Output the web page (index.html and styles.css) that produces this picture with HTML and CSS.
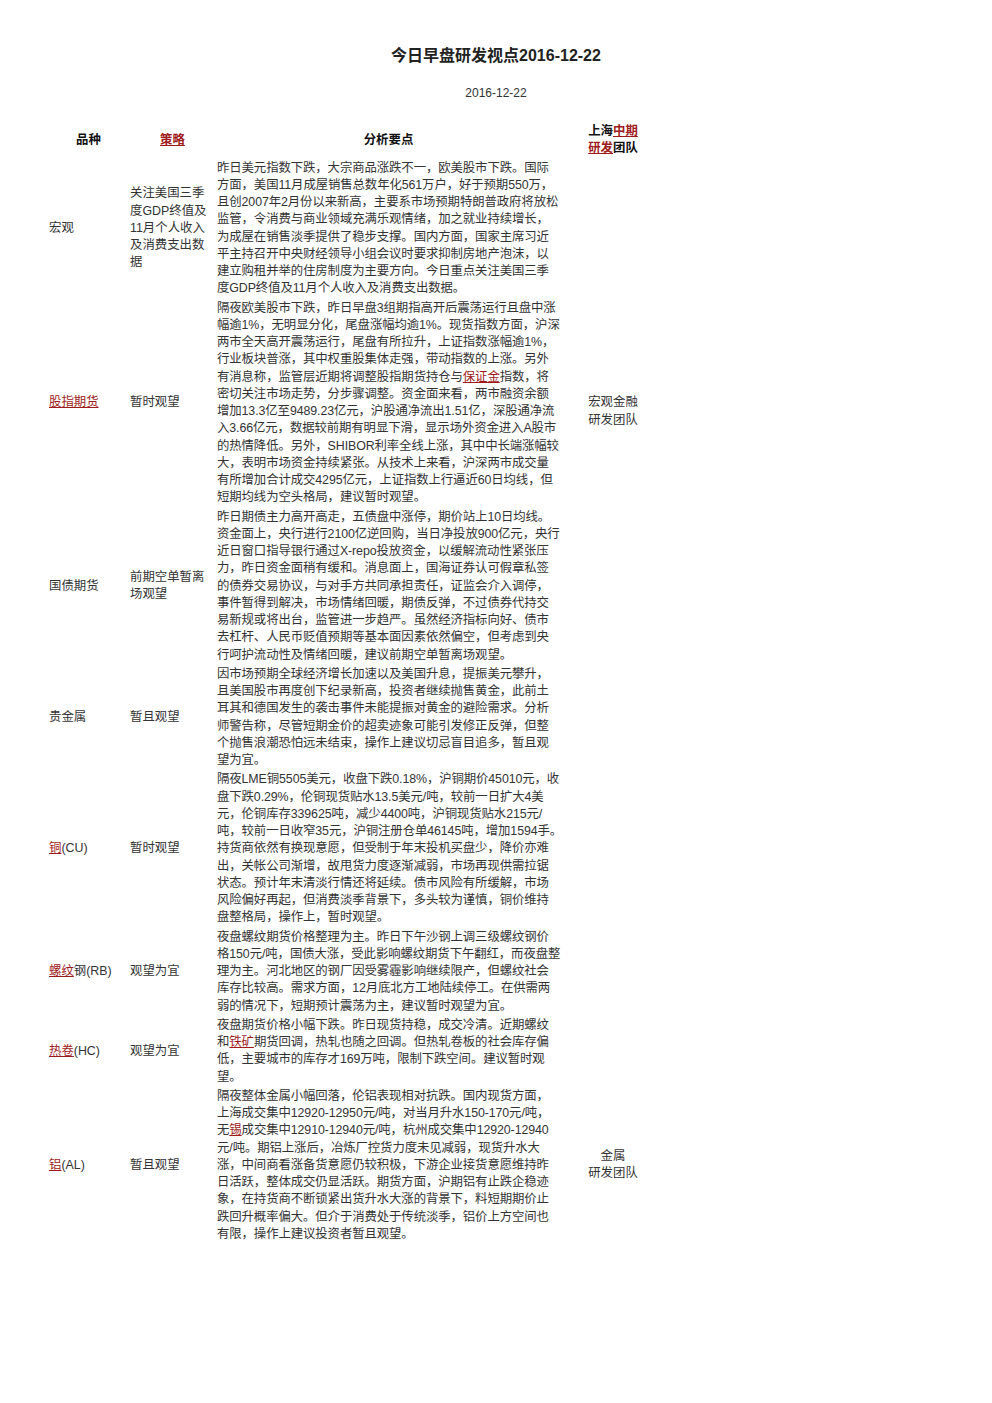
FILE: index.html
```html
<!DOCTYPE html>
<html lang="zh-CN">
<head>
<meta charset="utf-8">
<title>今日早盘研发视点2016-12-22</title>
<link rel="stylesheet" href="styles.css">
</head>
<body>
<div class="page">
  <h1 class="title">今日早盘研发视点2016-12-22</h1>
  <p class="date">2016-12-22</p>
  <table class="report">
    <thead>
      <tr>
        <th class="c1">品种</th>
        <th class="c2"><a href="#">策略</a></th>
        <th class="c3">分析要点</th>
        <th class="c4">上海<a href="#">中期</a><a href="#">研发</a>团队</th>
      </tr>
    </thead>
    <tbody>
      <tr>
        <td class="c1">宏观</td>
        <td class="c2">关注美国三季度GDP终值及11月个人收入及消费支出数据</td>
        <td class="c3">昨日美元指数下跌，大宗商品涨跌不一，欧美股市下跌。国际<br>方面，美国11月成屋销售总数年化561万户，好于预期550万，<br>且创2007年2月份以来新高，主要系市场预期特朗普政府将放松<br>监管，令消费与商业领域充满乐观情绪，加之就业持续增长，<br>为成屋在销售淡季提供了稳步支撑。国内方面，国家主席习近<br>平主持召开中央财经领导小组会议时要求抑制房地产泡沫，以<br>建立购租并举的住房制度为主要方向。今日重点关注美国三季<br>度GDP终值及11月个人收入及消费支出数据。</td>
        <td class="c4" rowspan="3">宏观金融研发团队</td>
      </tr>
      <tr>
        <td class="c1"><a href="#">股指期货</a></td>
        <td class="c2">暂时观望</td>
        <td class="c3">隔夜欧美股市下跌，昨日早盘3组期指高开后震荡运行且盘中涨<br>幅逾1%，无明显分化，尾盘涨幅均逾1%。现货指数方面，沪深<br>两市全天高开震荡运行，尾盘有所拉升，上证指数涨幅逾1%，<br>行业板块普涨，其中权重股集体走强，带动指数的上涨。另外<br>有消息称，监管层近期将调整股指期货持仓与<a href="#">保证金</a>指数，将<br>密切关注市场走势，分步骤调整。资金面来看，两市融资余额<br>增加13.3亿至9489.23亿元，沪股通净流出1.51亿，深股通净流<br>入3.66亿元，数据较前期有明显下滑，显示场外资金进入A股市<br>的热情降低。另外，SHIBOR利率全线上涨，其中中长端涨幅较<br>大，表明市场资金持续紧张。从技术上来看，沪深两市成交量<br>有所增加合计成交4295亿元，上证指数上行逼近60日均线，但<br>短期均线为空头格局，建议暂时观望。</td>
      </tr>
      <tr>
        <td class="c1">国债期货</td>
        <td class="c2">前期空单暂离场观望</td>
        <td class="c3">昨日期债主力高开高走，五债盘中涨停，期价站上10日均线。<br>资金面上，央行进行2100亿逆回购，当日净投放900亿元，央行<br>近日窗口指导银行通过X-repo投放资金，以缓解流动性紧张压<br>力，昨日资金面稍有缓和。消息面上，国海证券认可假章私签<br>的债券交易协议，与对手方共同承担责任，证监会介入调停，<br>事件暂得到解决，市场情绪回暖，期债反弹，不过债券代持交<br>易新规或将出台，监管进一步趋严。虽然经济指标向好、债市<br>去杠杆、人民币贬值预期等基本面因素依然偏空，但考虑到央<br>行呵护流动性及情绪回暖，建议前期空单暂离场观望。</td>
      </tr>
      <tr>
        <td class="c1">贵金属</td>
        <td class="c2">暂且观望</td>
        <td class="c3">因市场预期全球经济增长加速以及美国升息，提振美元攀升，<br>且美国股市再度创下纪录新高，投资者继续抛售黄金，此前土<br>耳其和德国发生的袭击事件未能提振对黄金的避险需求。分析<br>师警告称，尽管短期金价的超卖迹象可能引发修正反弹，但整<br>个抛售浪潮恐怕远未结束，操作上建议切忌盲目追多，暂且观<br>望为宜。</td>
        <td class="c4"></td>
      </tr>
      <tr>
        <td class="c1"><a href="#">铜</a>(CU)</td>
        <td class="c2">暂时观望</td>
        <td class="c3">隔夜LME铜5505美元，收盘下跌0.18%，沪铜期价45010元，收<br>盘下跌0.29%，伦铜现货贴水13.5美元/吨，较前一日扩大4美<br>元，伦铜库存339625吨，减少4400吨，沪铜现货贴水215元/<br>吨，较前一日收窄35元，沪铜注册仓单46145吨，增加1594手。<br>持货商依然有换现意愿，但受制于年末投机买盘少，降价亦难<br>出，关帐公司渐增，故甩货力度逐渐减弱，市场再现供需拉锯<br>状态。预计年末清淡行情还将延续。债市风险有所缓解，市场<br>风险偏好再起，但消费淡季背景下，多头较为谨慎，铜价维持<br>盘整格局，操作上，暂时观望。</td>
        <td class="c4"></td>
      </tr>
      <tr>
        <td class="c1"><a href="#">螺纹</a>钢(RB)</td>
        <td class="c2">观望为宜</td>
        <td class="c3">夜盘螺纹期货价格整理为主。昨日下午沙钢上调三级螺纹钢价<br>格150元/吨，国债大涨，受此影响螺纹期货下午翻红，而夜盘整<br>理为主。河北地区的钢厂因受雾霾影响继续限产，但螺纹社会<br>库存比较高。需求方面，12月底北方工地陆续停工。在供需两<br>弱的情况下，短期预计震荡为主，建议暂时观望为宜。</td>
        <td class="c4"></td>
      </tr>
      <tr>
        <td class="c1"><a href="#">热卷</a>(HC)</td>
        <td class="c2">观望为宜</td>
        <td class="c3">夜盘期货价格小幅下跌。昨日现货持稳，成交冷清。近期螺纹<br>和<a href="#">铁矿</a>期货回调，热轧也随之回调。但热轧卷板的社会库存偏<br>低，主要城市的库存才169万吨，限制下跌空间。建议暂时观<br>望。</td>
        <td class="c4"></td>
      </tr>
      <tr>
        <td class="c1"><a href="#">铝</a>(AL)</td>
        <td class="c2">暂且观望</td>
        <td class="c3">隔夜整体金属小幅回落，伦铝表现相对抗跌。国内现货方面，<br>上海成交集中12920-12950元/吨，对当月升水150-170元/吨，<br>无<a href="#">锡</a>成交集中12910-12940元/吨，杭州成交集中12920-12940<br>元/吨。期铝上涨后，冶炼厂控货力度未见减弱，现货升水大<br>涨，中间商看涨备货意愿仍较积极，下游企业接货意愿维持昨<br>日活跃，整体成交仍显活跃。期货方面，沪期铝有止跌企稳迹<br>象，在持货商不断锁紧出货升水大涨的背景下，料短期期价止<br>跌回升概率偏大。但介于消费处于传统淡季，铝价上方空间也<br>有限，操作上建议投资者暂且观望。</td>
        <td class="c4">金属<br>研发团队</td>
      </tr>
    </tbody>
  </table>
</div>
</body>
</html>
```

FILE: styles.css
```css
html, body {
  margin: 0;
  padding: 0;
  background: #ffffff;
}

body {
  font-family: "Liberation Sans", "Noto Sans CJK SC", sans-serif;
  color: #333333;
}

.page {
  padding-top: 46px;
}

.title {
  margin: 0;
  font-size: 16px;
  line-height: 20px;
  font-weight: bold;
  text-align: center;
  color: #222222;
}

.date {
  margin: 19px 0 0 0;
  font-size: 12px;
  line-height: 16px;
  text-align: center;
  color: #333333;
}

.report {
  margin: 21px 0 0 48px;
  border-collapse: separate;
  border-spacing: 0;
  table-layout: fixed;
  width: 617px;
  font-size: 12.4px;
  line-height: 17.25px;
}

.report th,
.report td {
  box-sizing: border-box;
  padding: 1px;
  vertical-align: middle;
  text-align: left;
  font-weight: normal;
}

.report th {
  font-weight: bold;
  color: #111111;
  text-align: center;
}

.report td.c3 {
  white-space: nowrap;
  letter-spacing: -0.1px;
}

.report .c1 { width: 81px; }
.report .c2 { width: 87px; }
.report .c3 { width: 345px; }
.report .c4 {
  width: 104px;
  padding: 1px 24px;
  text-align: center;
}

.report a {
  color: #9e1b1b;
  text-decoration: underline;
}
```
